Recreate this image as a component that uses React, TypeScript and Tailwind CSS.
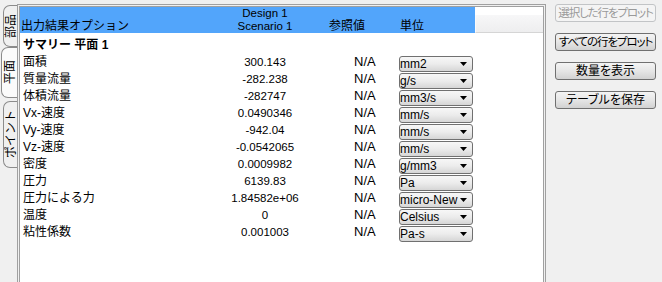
import React from "react";

const rows: [string, string, string][] = [
  ["面積", "300.143", "mm2"],
  ["質量流量", "-282.238", "g/s"],
  ["体積流量", "-282747", "mm3/s"],
  ["Vx-速度", "0.0490346", "mm/s"],
  ["Vy-速度", "-942.04", "mm/s"],
  ["Vz-速度", "-0.0542065", "mm/s"],
  ["密度", "0.0009982", "g/mm3"],
  ["圧力", "6139.83", "Pa"],
  ["圧力による力", "1.84582e+06", "micro-New"],
  ["温度", "0", "Celsius"],
  ["粘性係数", "0.001003", "Pa-s"],
];

function Tab({ label, h, selected, mt }: { label: string; h: string; selected?: boolean; mt: string }) {
  return (
    <div
      className={`${h} ${mt} ${selected ? "w-[16px] bg-[#fbfbfb]" : "w-[14px] bg-[#f0f0f0]"} border border-r-0 border-[#8c8c8c] rounded-l-[7px] flex items-center justify-center`}
    >
      <span className="[writing-mode:vertical-rl] [text-orientation:sideways] rotate-180 text-[12px] leading-[12px] text-black whitespace-nowrap">
        {label}
      </span>
    </div>
  );
}

function Dropdown({ value }: { value: string }) {
  return (
    <div className="mt-[1px] w-[74px] h-[16px] border border-[#707070] rounded-[3px] bg-linear-to-b from-[#f7f7f7] via-[#ececec] to-[#d6d6d6] flex items-center overflow-hidden">
      <span className="flex-1 text-[12px] leading-[14px] whitespace-nowrap overflow-hidden">{value}</span>
      <svg width="7" height="4" viewBox="0 0 7 4" className="mr-[5px] ml-[1px] shrink-0">
        <polygon points="0,0 7,0 3.5,4" fill="#000" />
      </svg>
    </div>
  );
}

function Btn({ label, disabled, tight }: { label: string; disabled?: boolean; tight?: boolean }) {
  return (
    <div
      className={`w-[101px] h-[18px] rounded-[3px] border flex items-center justify-center overflow-hidden leading-[14px] whitespace-nowrap [font-feature-settings:'palt'] ${
        tight ? "text-[11.5px] tracking-[-1.1px]" : "text-[12px]"
      } ${
        disabled
          ? "border-[#c2c4c6] bg-[#f4f4f4] text-[#9a9a9a]"
          : "border-[#707070] bg-linear-to-b from-[#f4f4f4] via-[#e6e6e6] to-[#d2d2d2] text-black"
      }`}
    >
      {label}
    </div>
  );
}

export default function App() {
  return (
    <div className="w-[662px] h-[282px] bg-[#f0f0f0] flex overflow-hidden font-['Liberation_Sans','Noto_Sans_CJK_JP',sans-serif] text-black">
      {/* left tabs */}
      <div className="w-[17px] shrink-0 flex flex-col items-end">
        <Tab label="部品" h="h-[42px]" mt="mt-[5px]" />
        <Tab label="平面" h="h-[51px]" mt="mt-0" selected />
        <Tab label="ポイント" h="h-[67px]" mt="mt-[3px]" />
      </div>

      {/* main frame */}
      <div className="w-[529px] shrink-0 mt-[4px] border border-b-0 border-[#a0a0a0] p-[1px] pb-0 flex">
        <div className="flex-1 border border-b-0 border-[#a0a0a0] bg-white flex flex-col">
          {/* header */}
          <div className="h-[26px] flex shrink-0">
            <div className="w-[455px] bg-[#52a5fb] flex items-end text-[12px] leading-[13px]">
              <div className="w-[205px] pl-[1px]">出力結果オプション</div>
              <div className="w-[80px] flex flex-col items-center text-[11.5px]">
                <span>Design 1</span>
                <span>Scenario 1</span>
              </div>
              <div className="w-[94px] pl-[24px]">参照値</div>
              <div className="flex-1 pl-[1px]">単位</div>
            </div>
            <div className="flex-1 flex flex-col">
              <div className="h-[8px]" />
              <div className="flex-1 bg-linear-to-b from-[#f7f7f8] to-[#eeeeef] border-b border-l border-b-[#d5d5d5] border-l-[#fafafa]" />
            </div>
          </div>

          {/* summary */}
          <div className="h-[22px] flex items-center pl-[3px] text-[12px] font-bold leading-[14px] pt-[1px]">
            サマリー 平面 1
          </div>

          {rows.map(([label, val, unit]) => (
            <div key={label} className="h-[17px] flex">
              <div className="w-[205px] pl-[3px] text-[12px] leading-[15px] whitespace-nowrap">{label}</div>
              <div className="w-[80px] text-center text-[11.5px] leading-[15px] whitespace-nowrap">{val}</div>
              <div className="w-[94px] pl-[49px] text-[13px] leading-[14px]">N/A</div>
              <Dropdown value={unit} />
            </div>
          ))}
        </div>
      </div>

      {/* right buttons */}
      <div className="flex-1 pl-[9px] pt-[4px] flex flex-col gap-[11px]">
        <Btn label="選択した行をプロット" disabled tight />
        <Btn label="すべての行をプロット" tight />
        <Btn label="数量を表示" />
        <Btn label="テーブルを保存" />
      </div>
    </div>
  );
}
